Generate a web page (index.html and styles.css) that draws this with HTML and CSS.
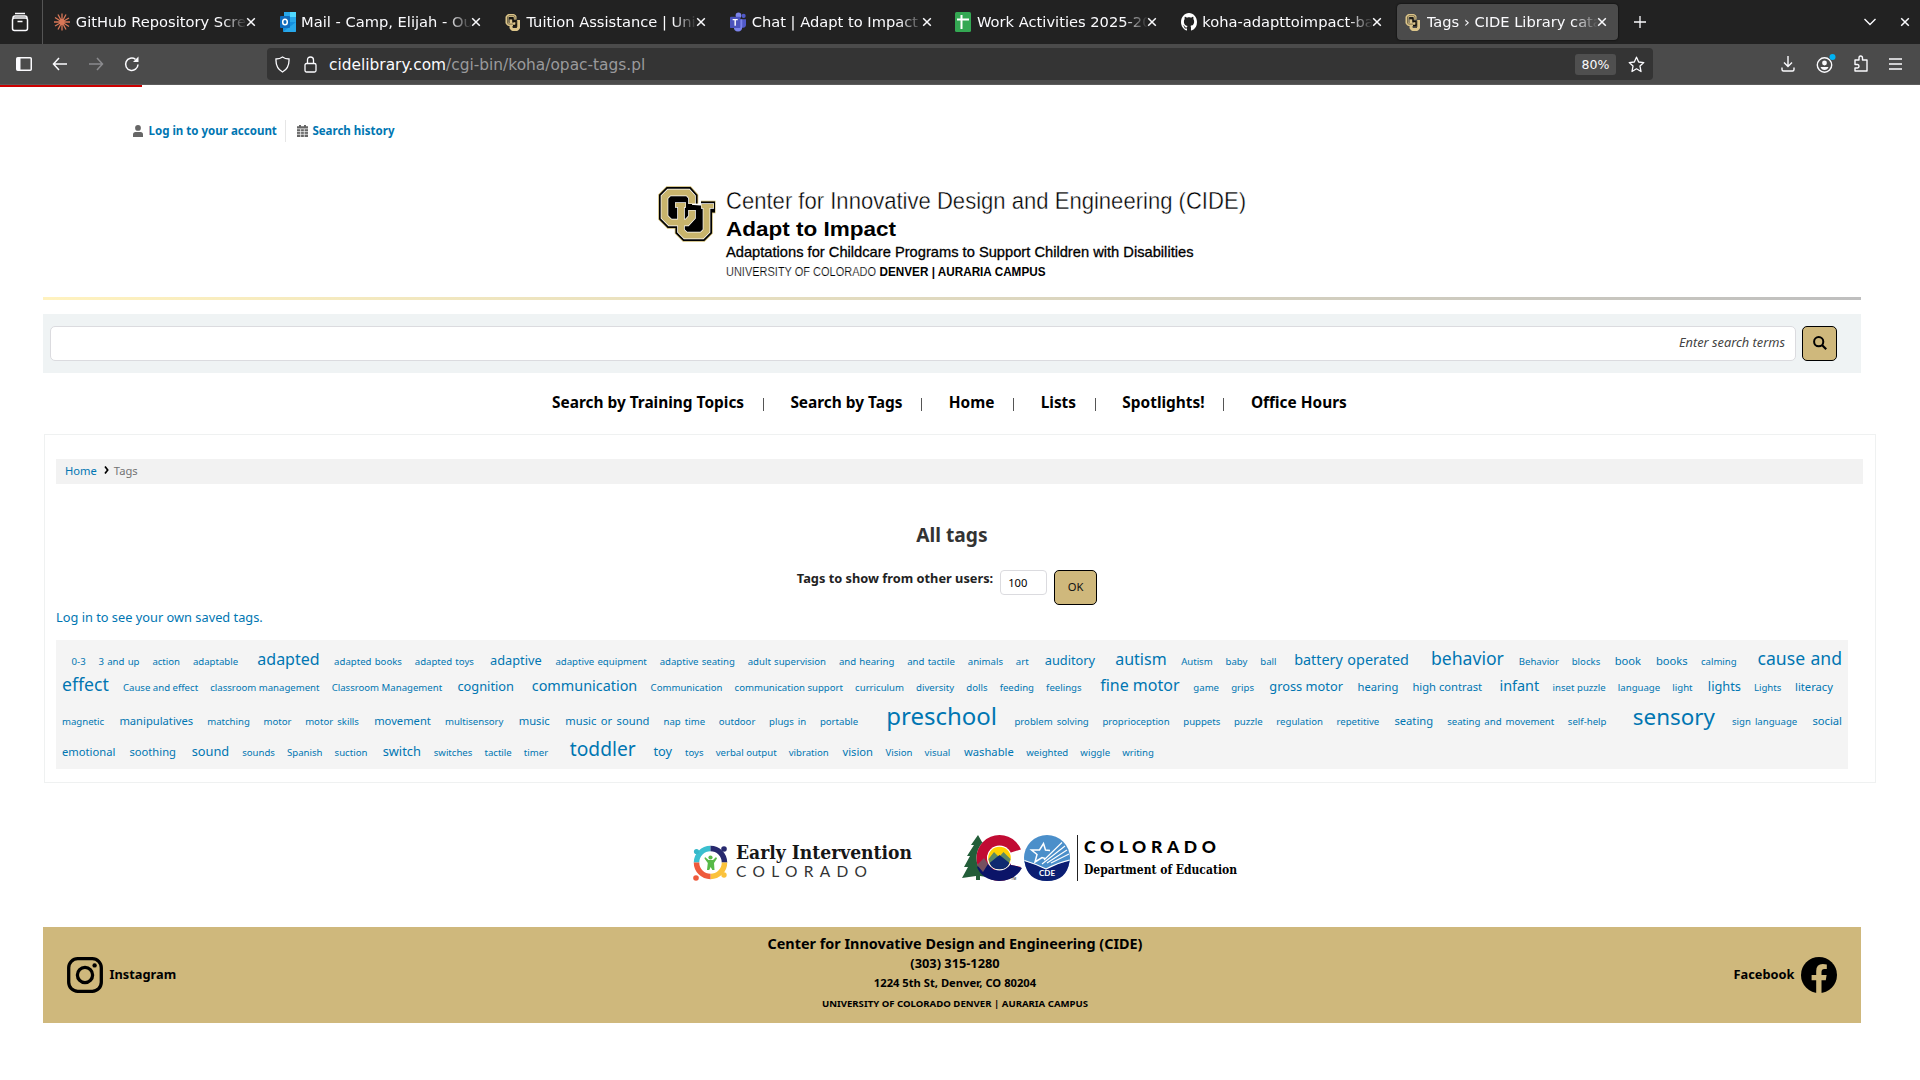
FILE: index.html
```html
<!DOCTYPE html>
<html lang="en">
<head>
<meta charset="utf-8">
<title>Tags › CIDE Library catalog</title>
<link rel="stylesheet" href="styles.css">
</head>
<body>
<svg class="defs" width="0" height="0" aria-hidden="true">
  <symbol id="cu" viewBox="0 0 58 56">
    <g fill="none" stroke-linejoin="miter">
      <g stroke="#c8b46c" stroke-width="12.500"><path d="M34 17.500V11L30 6.500H11L6.500 11V31L12 36.500H29L34 31V24"/><path d="M23 18V45L27.500 49.500H44L48.500 45V20M43 21H57.500"/></g>
      <g stroke="#000" stroke-width="11" fill="#000"><path d="M34 17.500V11L30 6.500H11L6.500 11V31L12 36.500H29L34 31V24"/><path d="M23 18V45L27.500 49.500H44L48.500 45V20M43 21H57"/></g>
      <g stroke="#fff" stroke-width="7.600"><path d="M34 18V11L30 6.500H11L6.500 11V31L12 36.500H29L34 31V24"/><path d="M23 17V45L27.500 49.500H44L48.500 45V18"/><path d="M17 19H28M43 20H56" stroke-width="5.500"/></g>
      <g stroke="#c8b46c" stroke-width="6.200"><path d="M34 17.500V11L30 6.500H11L6.500 11V31L12 36.500H29L34 31V24.500"/><path d="M23 18V45L27.500 49.500H44L48.500 45V18.500"/><path d="M17.500 19H27.500M43.500 20H55.500" stroke-width="4.200"/></g>
    </g>
  </symbol>
  <symbol id="cu-small" viewBox="0 0 16 18">
    <g fill="none" stroke-linejoin="bevel"><path d="M10 6V3L8.500 2H3.500L2 3.500V9.500L3.500 11H8.500L10 9.500V8" stroke="#dcc58a" stroke-width="3"/><path d="M6 6V14.500L7.500 16H12L13.500 14.500V6.500" stroke="#dcc58a" stroke-width="3"/><path d="M10 5.500V3L8.500 2.200H3.800L2.500 3.500V9.500L3.500 10.600H8M12 7V13.500L11 14.500" stroke="#3a3220" stroke-width=".6"/><path d="M4.500 4.500H8V8H11V12H8" stroke="#15120a" stroke-width="1.300"/></g>
  </symbol>
  <symbol id="x" viewBox="0 0 10 10"><path d="M1.200 1.200L8.800 8.800M8.800 1.200L1.200 8.800" stroke="#fbfbfe" stroke-width="1.500" fill="none"/></symbol>
</svg>

<header class="browser">
  <div class="tabbar">
    <div class="firefox-view"><svg width="18" height="20" viewBox="0 0 18 20" fill="none" stroke="#fbfbfe" stroke-width="1.500"><path d="M4 1.500H14"/><rect x="1.500" y="6" width="15" height="12.500" rx="2"/><path d="M2 6Q2 4 4 4H14Q16 4 16 6M6.500 9.500H11.500"/></svg></div>
    <div class="tab"><svg width="16" height="18" viewBox="-8 -9 16 18" stroke="#d97757" stroke-width="1.300"><path d="M0 0V-8.500M0 0V8.500M0 0H8M0 0H-8M0 0L4 -7.500M0 0L-4 7.500M0 0L-4 -7.500M0 0L4 7.500M0 0L7 -4M0 0L-7 4M0 0L-7 -4.500M0 0L7 4.500"/></svg><span class="label">GitHub Repository Screenshots</span><svg class="close"><use href="#x"/></svg></div>
    <div class="tab"><svg width="16" height="20" viewBox="0 0 16 20"><rect x="4" y="0" width="12" height="10" fill="#28a8ea"/><rect x="10" width="6" height="5" fill="#50d9ff"/><rect x="4" y="5" width="6" height="6" fill="#0364b8"/><path d="M3 10L16 10V18.500Q16 20 15 20H4Q3 20 3 19Z" fill="#1490df"/><path d="M16 10L3 20H15Q16 20 16 19Z" fill="#28a8ea"/><rect y="4" width="10" height="12" rx="1" fill="#0f6cbd"/><ellipse cx="5" cy="10" rx="2.300" ry="2.800" fill="none" stroke="#fff" stroke-width="1.500"/></svg><span class="label">Mail - Camp, Elijah - Outlook</span><svg class="close"><use href="#x"/></svg></div>
    <div class="tab"><svg width="16" height="19"><use href="#cu-small"/></svg><span class="label">Tuition Assistance | University</span><svg class="close"><use href="#x"/></svg></div>
    <div class="tab"><svg width="16" height="20" viewBox="0 0 17 20"><circle cx="14.500" cy="3.500" r="2.200" fill="#5059c9"/><circle cx="9" cy="3" r="3" fill="#7b83eb"/><path d="M12 7H17V13Q17 16 14 16H12Z" fill="#5059c9"/><path d="M4 7H13V15Q13 20 8.500 20T4 15Z" fill="#7b83eb"/><rect y="4.500" width="11" height="12" rx="1" fill="#4b53bc"/><path d="M2.800 7.500H8.200M5.500 7.500V14" stroke="#fff" stroke-width="1.500"/></svg><span class="label">Chat | Adapt to Impact | Teams</span><svg class="close"><use href="#x"/></svg></div>
    <div class="tab"><svg width="16" height="20" viewBox="0 0 16 20"><rect width="16" height="20" rx="1.500" fill="#34a853"/><path d="M2 7.500H14M6.500 3V17" stroke="#fff" stroke-width="2"/></svg><span class="label">Work Activities 2025-2026</span><svg class="close"><use href="#x"/></svg></div>
    <div class="tab"><svg width="16" height="18" viewBox="0 0 16 16" preserveAspectRatio="none"><path fill="#fff" d="M8 0C3.580 0 0 3.580 0 8c0 3.540 2.290 6.530 5.470 7.590.4.070.55-.17.55-.38 0-.19-.01-.82-.01-1.490-2.010.37-2.530-.49-2.690-.94-.09-.23-.48-.94-.82-1.130-.28-.15-.68-.52-.01-.53.63-.01 1.080.58 1.230.82.72 1.210 1.870.87 2.330.66.07-.52.28-.87.51-1.070-1.780-.2-3.640-.89-3.640-3.950 0-.87.31-1.590.82-2.150-.08-.2-.36-1.020.08-2.120 0 0 .67-.21 2.200.82.64-.18 1.320-.27 2-.27s1.360.09 2 .27c1.530-1.040 2.200-.82 2.200-.82.44 1.100.16 1.920.08 2.120.51.56.82 1.270.82 2.150 0 3.070-1.870 3.750-3.650 3.950.29.25.54.73.54 1.480 0 1.070-.01 1.930-.01 2.200 0 .21.15.46.55.38A8.010 8.010 0 0 0 16 8c0-4.420-3.580-8-8-8z"/></svg><span class="label">koha-adapttoimpact-backup</span><svg class="close"><use href="#x"/></svg></div>
    <div class="tab active"><svg width="16" height="19"><use href="#cu-small"/></svg><span class="label">Tags › CIDE Library catalog</span><svg class="close"><use href="#x"/></svg></div>
    <svg class="newtab" width="14" height="14" viewBox="0 0 14 14"><path d="M7 1V13M1 7H13" stroke="#fbfbfe" stroke-width="1.300"/></svg>
    <div class="window-tools">
      <svg width="14" height="8" viewBox="0 0 14 8"><path d="M1.500 1L7 6.500L12.500 1" stroke="#fbfbfe" stroke-width="1.400" fill="none"/></svg>
      <svg width="10" height="10"><use href="#x"/></svg>
    </div>
  </div>
  <div class="toolbar">
    <div class="history">
      <svg width="16" height="14" viewBox="0 0 16 14"><rect x=".75" y=".75" width="14.500" height="12.500" rx="1" fill="none" stroke="#fbfbfe" stroke-width="1.500"/><path d="M1 1H4.500V13H1Z" fill="#fbfbfe"/></svg>
      <svg width="16" height="14" viewBox="0 0 16 14" fill="none" stroke="#fbfbfe" stroke-width="1.500"><path d="M15 7H1.500M7 1L1.500 7L7 13"/></svg>
      <svg width="16" height="14" viewBox="0 0 16 14" fill="none" stroke="#8b8b8e" stroke-width="1.500"><path d="M1 7H14.500M9 1L14.500 7L9 13"/></svg>
      <svg width="16" height="16" viewBox="0 0 16 16" fill="none" stroke="#fbfbfe" stroke-width="1.500"><path d="M14 8.500A6.200 6.200 0 1 1 11.500 3.300"/><path d="M9 6H14.500V.5" fill="#fbfbfe" stroke="none"/></svg>
    </div>
    <div class="urlbar">
      <svg width="15" height="17" viewBox="0 0 15 17" fill="none" stroke="#fbfbfe" stroke-width="1.300"><path d="M7.500 1Q10 3 14 3Q14.500 12 7.500 16Q.5 12 1 3Q5 3 7.500 1Z"/></svg>
      <svg width="13" height="17" viewBox="0 0 13 17" fill="none" stroke="#fbfbfe" stroke-width="1.300"><rect x="1" y="7.500" width="11" height="8.500" rx="1.500"/><path d="M3.500 7.500V4Q3.500 1 6.500 1T9.500 4V7.500"/></svg>
      <div class="url">cidelibrary.com<span>/cgi-bin/koha/opac-tags.pl</span></div>
      <div class="zoom">80%</div>
      <svg width="17" height="17" viewBox="0 0 17 17" fill="none" stroke="#fbfbfe" stroke-width="1.300" stroke-linejoin="round"><path d="M8.500 1.200L10.700 6L15.800 6.600L12 10.100L13 15.500L8.500 12.800L4 15.500L5 10.100L1.200 6.600L6.300 6Z"/></svg>
    </div>
    <div class="actions">
      <svg width="14" height="16" viewBox="0 0 14 16" fill="none" stroke="#fbfbfe" stroke-width="1.400"><path d="M7 0V10M3 6.500L7 10.500L11 6.500M1 11.500V13.500Q1 15 2.500 15H11.500Q13 15 13 13.500V11.500"/></svg>
      <svg width="20" height="20" viewBox="0 0 20 20"><circle cx="8.500" cy="11" r="7.200" fill="none" stroke="#fbfbfe" stroke-width="1.400"/><circle cx="8.500" cy="9" r="2.400" fill="#fbfbfe"/><path d="M4.500 13H12.500Q11.500 16 8.500 16T4.500 13Z" fill="#fbfbfe"/><circle cx="16.500" cy="3" r="3" fill="#00b3f4"/></svg>
      <svg class="ext" width="14" height="17" viewBox="0 0 14 17" fill="none" stroke="#fbfbfe" stroke-width="1.400"><path d="M1 7.500V5H5V3Q5 1 6.700 1T8.500 3V5H13V16H1V13H3.500Q5 13 5 11.300T3.500 9.500H1Z" stroke-linejoin="round"/></svg>
      <svg width="13" height="12" viewBox="0 0 13 12"><path d="M0 1H13M0 6H13M0 11H13" stroke="#fbfbfe" stroke-width="1.400"/></svg>
    </div>
  </div>
</header>
<div class="loader"></div>

<nav class="account">
  <a href="#"><svg width="10" height="12" viewBox="0 0 10 12" fill="#666"><circle cx="5" cy="2.900" r="2.900"/><path d="M0 12V9.500Q0 7 2.500 7H7.500Q10 7 10 9.500V12Z"/></svg>Log in to your account</a>
  <a href="#"><svg width="11" height="12" viewBox="0 0 11 12"><path d="M2 0H4V1.300H7V0H9V1.300H11V12H0V1.300H2Z" fill="#666"/><path d="M0 3.800H11M0 6.600H11M0 9.300H11M3.600 4V12M7.300 4V12" stroke="#fff" stroke-width=".7"/></svg>Search history</a>
</nav>

<div class="masthead">
  <svg width="600" height="100" viewBox="0 0 600 100" font-family="Liberation Sans, Arial, sans-serif">
    <svg x="1" y="6" width="58" height="56" overflow="visible"><use href="#cu"/></svg>
    <text x="69" y="29" font-size="24.500" textLength="520" lengthAdjust="spacingAndGlyphs" stroke="#fff" stroke-width=".4">Center for Innovative Design and Engineering (CIDE)</text>
    <text x="69" y="56" font-size="20.500" font-weight="bold" textLength="170" lengthAdjust="spacingAndGlyphs">Adapt to Impact</text>
    <text x="69" y="77" font-size="14.400" textLength="467.500" lengthAdjust="spacingAndGlyphs" stroke="#000" stroke-width=".3">Adaptations for Childcare Programs to Support Children with Disabilities</text>
    <text x="69" y="96" font-size="12.500" textLength="150" lengthAdjust="spacingAndGlyphs" stroke="#fff" stroke-width=".2">UNIVERSITY OF COLORADO</text>
    <text x="222.500" y="96" font-size="12" font-weight="bold" textLength="166" lengthAdjust="spacingAndGlyphs">DENVER | AURARIA CAMPUS</text>
  </svg>
</div>
<div class="rule"></div>

<form class="search">
  <input type="text" placeholder="Enter search terms">
  <button type="button" class="gold"><svg width="14" height="14" viewBox="0 0 14 14" fill="none" stroke="#000"><circle cx="5.700" cy="5.700" r="4.600" stroke-width="2"/><path d="M9 9L13.200 13.200" stroke-width="2.200"/></svg></button>
</form>

<nav class="menu"><a href="#">Search by Training Topics</a><a href="#">Search by Tags</a><a href="#">Home</a><a href="#">Lists</a><a href="#">Spotlights!</a><a href="#">Office Hours</a></nav>

<main>
  <div class="crumbs"><a href="#">Home</a><svg width="5" height="8" viewBox="0 0 5 8"><path d="M1 .5L3.700 4L1 7.500" fill="none" stroke="#000" stroke-width="1.700"/></svg><span>Tags</span></div>
  <h1>All tags</h1>
  <form class="count"><label for="n">Tags to show from other users:</label><input id="n" type="text" value="100"><button type="button" class="gold">OK</button></form>
  <a class="login" href="#">Log in to see your own saved tags.</a>
  <div class="cloud">
    <div class="line l1"><a>0-3 </a><a>3 and up </a><a>action </a><a>adaptable </a><a class="w4">adapted </a><a>adapted books </a><a>adapted toys </a><a class="w2">adaptive </a><a>adaptive equipment </a><a>adaptive seating </a><a>adult supervision </a><a>and hearing </a><a>and tactile </a><a>animals </a><a>art </a><a class="w2">auditory </a><a class="w4">autism </a><a>Autism </a><a>baby </a><a>ball </a><a class="w3">battery operated </a><a class="w5">behavior </a><a>Behavior </a><a>blocks </a><a class="w1">book </a><a class="w1">books </a><a>calming </a><a class="w5">cause and</a></div>
    <div class="line l2"><a class="w5">effect </a><a>Cause and effect </a><a>classroom management </a><a>Classroom Management </a><a class="w2">cognition </a><a class="w3">communication </a><a>Communication </a><a>communication support </a><a>curriculum </a><a>diversity </a><a>dolls </a><a>feeding </a><a>feelings </a><a class="w4">fine motor </a><a>game </a><a>grips </a><a class="w2">gross motor </a><a class="w1">hearing </a><a class="w1">high contrast </a><a class="w3">infant </a><a>inset puzzle </a><a>language </a><a>light </a><a class="w2">lights </a><a>Lights </a><a class="w1">literacy</a></div>
    <div class="line l3"><a>magnetic </a><a class="w1">manipulatives </a><a>matching </a><a>motor </a><a>motor skills </a><a class="w1">movement </a><a>multisensory </a><a class="w1">music </a><a class="w1">music or sound </a><a>nap time </a><a>outdoor </a><a>plugs in </a><a>portable </a><a class="w8">preschool </a><a>problem solving </a><a>proprioception </a><a>puppets </a><a>puzzle </a><a>regulation </a><a>repetitive </a><a class="w1">seating </a><a>seating and movement </a><a>self-help </a><a class="w7">sensory </a><a>sign language </a><a class="w1">social</a></div>
    <div class="line l4"><a class="w1">emotional </a><a class="w1">soothing </a><a class="w2">sound </a><a>sounds </a><a>Spanish </a><a>suction </a><a class="w2">switch </a><a>switches </a><a>tactile </a><a>timer </a><a class="w6">toddler </a><a class="w2">toy </a><a>toys </a><a>verbal output </a><a>vibration </a><a class="w1">vision </a><a>Vision </a><a>visual </a><a class="w1">washable </a><a>weighted </a><a>wiggle </a><a>writing</a></div>
  </div>
</main>

<div class="sponsors">
  <svg width="222" height="50" viewBox="0 0 222 50">
    <g fill="none" stroke-width="5.500">
      <path d="M4.500 28.500A14 14 0 0 1 18.500 14.500" stroke="#3bbfcf"/><path d="M18.500 14.500A14 14 0 0 1 32.500 28.500" stroke="#27296e"/>
      <path d="M32.500 28.500A14 14 0 0 1 18.500 42.500" stroke="#fbc23c"/><path d="M18.500 42.500A14 14 0 0 1 4.500 28.500" stroke="#ee5a3c"/>
    </g>
    <circle cx="4.500" cy="17.500" r="2.600" fill="#35b8c9"/><circle cx="32" cy="15" r="2.800" fill="#27296e"/><circle cx="32" cy="41" r="2.700" fill="#fbc23c"/><circle cx="4" cy="44" r="2.800" fill="#ee5a3c"/>
    <circle cx="18.500" cy="23.500" r="2.100" fill="#57b947"/><path d="M13 23L16.500 26H21L24 23L25 24.500L22 29L22.500 36H20.300L18.700 33L17.200 36H15L15.800 29L12.500 24.500Z" fill="#57b947"/>
    <text x="44" y="25" font-family="DejaVu Serif, serif" font-weight="bold" font-size="18" textLength="176" lengthAdjust="spacingAndGlyphs" fill="#161616">Early Intervention</text>
    <text x="44" y="42.500" font-family="Lato, sans-serif" font-size="15.500" textLength="131" fill="#333">COLORADO</text>
  </svg>
  <svg width="280" height="50" viewBox="0 0 280 50">
    <path d="M16 1L9 11H12L5 22H8L2 33H6L0 44L14 42V46H18V42L32 44V8H20Z" fill="#235e39"/>
    <circle cx="37.500" cy="24" r="23" fill="#fff"/>
    <clipPath id="cc"><path d="M0 0H62V14.500L49 18.500V31L62 33.500V50H0Z"/></clipPath>
    <g clip-path="url(#cc)"><circle cx="37.500" cy="24" r="17.500" fill="none" stroke="#c10b33" stroke-width="11"/><path d="M15 33L24 28L32 36L50 30L60 34Q53 47 37 47Q20 46 15 33Z" fill="#0b1468"/><path d="M15 31L22 24L26 30L21 38Z" fill="#76505f"/></g>
    <circle cx="37.500" cy="24" r="12.500" fill="#fff"/><circle cx="37.500" cy="24" r="11.300" fill="#ffd100"/><path d="M26.500 25L32 18L37 23L41.500 18L48.500 25Q46 35 37 35T26.500 25Z" fill="#5d8a62"/><path d="M27.500 29L37.500 21L47.500 29Q45 35.300 37.500 35.300T27.500 29Z" fill="#0e2a70"/>
    <text x="49" y="46" font-size="3.500" font-family="Liberation Sans, sans-serif">TM</text>
    <circle cx="85" cy="24" r="23" fill="#4b8fca"/><path d="M62.500 27Q74 30 84 35Q95 29 107.500 27Q105 47 85 47T62.500 27Z" fill="#0b1e73"/><path d="M62.500 26.500Q74 30 84 35Q95 29 107.500 26" fill="none" stroke="#fff" stroke-width="1.200"/>
    <path d="M88 16.500L83.500 16L81.500 9.500L77.500 16L69.500 16L75 20.500L73 28L80 23.500L83 24.500" fill="none" stroke="#fff" stroke-width="1.500"/><path d="M82 26L100 8.500M80 30L103 12M85 29L105 16M89 29L107 20" stroke="#fff" stroke-width="1.100"/>
    <text x="77" y="42" fill="#fff" font-family="Lato, sans-serif" font-weight="bold" font-size="8" textLength="16">CDE</text>
    <path d="M115.500 1V47" stroke="#222"/>
    <text x="122" y="19" font-family="Lato, sans-serif" font-weight="900" font-size="17.500" textLength="132">COLORADO</text>
    <text x="122" y="39.500" font-family="DejaVu Serif, serif" font-weight="bold" font-size="12.500" textLength="153" lengthAdjust="spacingAndGlyphs">Department of Education</text>
  </svg>
</div>

<footer>
  <a class="social" href="#"><svg width="36" height="36" viewBox="0 0 36 36" fill="none" stroke="#000" stroke-width="3.300"><rect x="1.700" y="1.700" width="32.600" height="32.600" rx="9"/><circle cx="18" cy="18" r="7.600"/><circle cx="27.600" cy="8.400" r="2.200" fill="#000" stroke="none"/></svg><span>Instagram</span></a>
  <div class="contact"><p class="name">Center for Innovative Design and Engineering (CIDE)</p><p class="phone">(303) 315-1280</p><p class="addr">1224 5th St, Denver, CO 80204</p><p class="campus">UNIVERSITY OF COLORADO DENVER | AURARIA CAMPUS</p></div>
  <a class="social fb" href="#"><span>Facebook</span><svg width="36" height="36" viewBox="0 0 36 36"><circle cx="18" cy="18" r="18"/><path d="M15.200 36V23.200H10.600V18H15.200V14Q15.200 7 21.800 7Q24 7 25.800 7.400V11.900H23.400Q20.500 11.900 20.500 14.800V18H25.600L24.800 23.200H20.500V36Z" fill="#cfb87c"/></svg></a>
</footer>
</body>
</html>
```
FILE: styles.css
```css
* { box-sizing: border-box; }
body { margin: 0; height: 1080px; overflow: hidden; background: #fff; color: #000; font-family: "Noto Sans", sans-serif; }
a { text-decoration: none; color: #0076b2; }
svg { flex: none; }
.defs { position: absolute; }
input, button { font-family: inherit; margin: 0; }

.browser { font-family: "DejaVu Sans", sans-serif; color: #fbfbfe; }
.tabbar { display: flex; align-items: center; height: 44px; background: #222; }
.firefox-view { display: flex; align-items: center; justify-content: center; width: 43px; height: 44px; padding-right: 2px; border-right: 1px solid #555; }
.tab { display: flex; align-items: center; width: 221px; height: 36px; margin: 0 2px 0 2.300px; padding: 0 10.500px 0 9px; border-radius: 4px; }
.tab.active { margin-left: 2px; padding-left: 8.500px; background: #4b4b4b; box-shadow: 0 0 2px #000; }
.label { flex: 1; margin: 0 -1px 0 5.500px; overflow: hidden; white-space: nowrap; font-size: 14.670px; line-height: 20px; -webkit-mask-image: linear-gradient(to left, transparent, #000 24px); mask-image: linear-gradient(to left, transparent, #000 24px); }
.close { width: 10px; height: 10px; }
.newtab { margin-left: 13px; }
.window-tools { display: flex; align-items: center; gap: 23px; margin-left: auto; padding-right: 10px; }
.toolbar { display: flex; align-items: center; height: 41px; background: #4b4b4b; border-bottom: 1px solid #5c5c5c; }
.history { display: flex; align-items: center; gap: 20px; width: 267px; padding: 0 0 1px 16px; }
.urlbar { display: flex; align-items: center; width: 1386px; height: 32px; padding: 0 8px; background: #343434; border-radius: 4px; }
.urlbar svg + svg { margin-left: 14px; }
.url { flex: 1; margin-left: 12px; padding-top: 1px; font-size: 15.400px; }
.url span { color: #9a9a9c; }
.zoom { width: 41px; margin-right: 12px; text-align: center; background: #4f4f4f; border-radius: 3px; font-size: 12.500px; line-height: 21px; }
.actions { display: flex; align-items: center; justify-content: space-between; width: 121px; margin: 0 18px 1px auto; }
.ext { margin-left: -2px; }
.loader { width: 142px; height: 2px; background: #c00; }

.account { display: flex; height: 22px; margin: 33px 0 0 133px; font-size: 11.520px; font-weight: bold; line-height: 22px; }
.account a { display: flex; align-items: center; gap: 5.500px; }
.account a + a { gap: 4.500px; margin-left: 8px; padding-left: 11px; border-left: 1px solid #e6e6e6; }
.masthead { height: 155px; padding: 38px 0 0 657px; }
.rule { height: 3px; margin: 0 59px 0 43px; background: linear-gradient(to right, #fff2bf, #bfbfbf); }
.gold { display: flex; align-items: center; justify-content: center; height: 35px; padding: 0; background: #cfb87c; border: 1px solid #000; border-radius: 5px; color: #111; }
.search { display: flex; gap: 6px; height: 59px; margin: 14px 59px 0 43px; padding: 12px 24px 0 7px; background: #eff3f4; }
.search input { flex: 1; height: 35px; padding: 0 10px 3px; border: 1px solid #dbdbdf; border-radius: 5px; text-align: right; font-size: 12.800px; }
.search input::placeholder { color: #444; font-style: italic; }
.search .gold { width: 35px; padding-bottom: 1px; }
.menu { display: flex; align-items: center; height: 61px; padding: 0 0 2px 552px; font-size: 15.420px; font-weight: bold; }
.menu a { display: flex; align-items: center; color: #000; white-space: nowrap; }
.menu a + a::before { content: ""; width: 1px; height: 13px; margin: 3px 26.500px 0 18.800px; background: #555; }

main { height: 349px; margin: 0 44px; padding: 24px 12px 0 11px; border: 1px solid #eff1f1; }
.crumbs { display: flex; align-items: center; gap: 6px; height: 25px; padding: 0 8px 2px 9px; background: #f2f2f2; font-size: 11.200px; }
.crumbs svg { margin: -1px 0 0 1.500px; }
.crumbs span { color: #727272; margin-left: -1.500px; }
h1 { margin: 37px 15px 0 0; text-align: center; font-size: 19.200px; line-height: 28px; font-weight: bold; color: #333; }
.count { display: flex; justify-content: center; gap: 7px; height: 35px; margin: 21px 25px 0 0; font-size: 12.800px; }
.count label { font-weight: bold; line-height: 16px; color: #222; }
.count input { width: 47px; height: 25px; padding: 0 7px 1px; border: 1px solid #dbdbdf; border-radius: 4px; font-size: 11.200px; }
.count .gold { width: 43px; padding-bottom: 2px; font-size: 11.200px; }
.login { display: block; margin: 3px 0 14px; font-size: 12.800px; line-height: 18px; }
.cloud { height: 129px; margin-right: 15px; padding: 9px 6px 0 6px; background: #f4f4f4; font-size: 9.600px; }
.line { white-space: nowrap; text-align: justify; text-align-last: justify; }
.line a { margin-left: 1em; line-height: 0; white-space: normal; }
.line:not(.l1) a:first-child { margin-left: 0; }
.l1 { line-height: 26px; }
.l2 { line-height: 25px; padding-right: 9px; }
.l3 { line-height: 44px; }
.l4 { line-height: 18px; text-align-last: left; }
.w1 { font-size: 11.200px; }
.w2 { font-size: 12.800px; }
.w3 { font-size: 14.400px; }
.w4 { font-size: 16px; }
.w5 { font-size: 17.600px; }
.w6 { font-size: 19.200px; }
.w7 { font-size: 22.400px; }
.w8 { font-size: 24px; }

.sponsors { display: flex; gap: 48px; height: 144px; padding: 51px 0 0 692px; }
footer { display: flex; justify-content: space-between; height: 96px; margin: 0 59px 0 43px; padding: 0 24px; background: #cfb87c; font-weight: bold; }
.social { display: flex; align-items: center; gap: 6.500px; width: 150px; color: #000; font-size: 12.800px; }
.social span { padding-bottom: 2px; }
.fb { justify-content: flex-end; }
.contact { padding: 7px 0 0 6px; text-align: center; }
.contact p { margin: 0; line-height: 20px; }
.contact .name { font-size: 14.400px; }
.contact .phone { font-size: 12.800px; line-height: 19px; }
.contact .addr { font-size: 11.200px; }
.contact .campus { font-size: 9.600px; line-height: 21px; }
```
